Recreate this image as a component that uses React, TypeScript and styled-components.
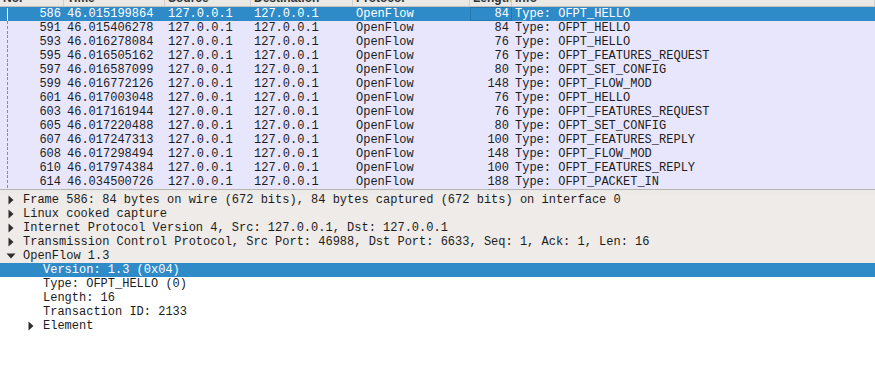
import React from 'react';
import styled, {createGlobalStyle} from 'styled-components';

const Global = createGlobalStyle`
  html, body {
    margin: 0;
    padding: 0;
    background: #ffffff;
  }
  #root {
    height: 373px;
    overflow: hidden;
  }
`;

const COLS = '64px 101px 86px 102px 117px 42px 1fr';

const Window = styled.div`
  display: flex;
  flex-direction: column;
  height: 373px;
  font-family: "Liberation Mono", "DejaVu Sans Mono", monospace;
  font-size: 12px;
  color: #1c1c1c;
  background: #ffffff;
`;

const PacketList = styled.section`
  display: flex;
  flex-direction: column;
  overflow: hidden;
  border-bottom: 1px solid #b9b6b2;
`;

const HeaderRow = styled.div`
  display: grid;
  grid-template-columns: ${COLS};
  height: 20px;
  margin-top: -14px;
  background: #ebe9e6;
  border-bottom: 1px solid #c4c0bb;
  font-family: "Liberation Sans", sans-serif;
  font-weight: bold;
  color: #2e3436;
`;

const HeaderCell = styled.div`
  padding: 5px 3px 0;
  line-height: 14px;
  border-right: 1px solid #d2cec9;
  white-space: nowrap;
  overflow: hidden;
`;

const Row = styled.div<{$selected?: boolean}>`
  display: grid;
  grid-template-columns: ${COLS};
  height: 14px;
  line-height: 14px;
  background: ${p => (p.$selected ? '#2f8bc8' : '#e7e6fd')};
  color: ${p => (p.$selected ? '#ffffff' : '#1c1c1c')};
`;

const Cell = styled.div<{$right?: boolean; $focus?: boolean}>`
  position: relative;
  padding: 0 3px;
  text-align: ${p => (p.$right ? 'right' : 'left')};
  white-space: nowrap;
  overflow: hidden;
  box-sizing: border-box;
  ${p => (p.$focus ? 'box-shadow: inset 0 0 0 1px #2478b1;' : '')}
`;

const Relation = styled.span<{$first?: boolean}>`
  position: absolute;
  left: 7px;
  top: ${p => (p.$first ? '1px' : '0')};
  bottom: 0;
  width: 1px;
  background: ${p =>
    p.$first
      ? '#ffffff'
      : 'repeating-linear-gradient(to bottom, #8a8aa8 0 3px, transparent 3px 5px)'};
`;

const Divider = styled.div`
  position: relative;
  height: 3px;
  background: #eceae7;
`;

const Grip = styled.span`
  position: absolute;
  left: 488px;
  top: -1px;
  width: 12px;
  border-top: 1px dotted #a9a6a2;
`;

const Details = styled.section`
  flex: 1;
  display: flex;
  flex-direction: column;
  background: #ffffff;
`;

const TreeRow = styled.div<{$selected?: boolean; $shaded?: boolean; $depth: number}>`
  display: flex;
  align-items: center;
  height: 14px;
  line-height: 14px;
  padding-left: ${p => 4 + p.$depth * 20}px;
  background: ${p => (p.$selected ? '#2f8bc8' : p.$shaded ? '#eeebe8' : '#ffffff')};
  color: ${p => (p.$selected ? '#ffffff' : '#1c1c1c')};
  white-space: nowrap;
`;

const Expander = styled.span`
  display: inline-flex;
  align-items: center;
  justify-content: center;
  width: 14px;
  height: 14px;
  margin-right: 5px;
`;

type Packet = {no: number; time: string; proto: string; len: number; info: string};

const packets: Packet[] = [
  {no: 586, time: '46.015199864', proto: 'OpenFlow', len: 84, info: 'Type: OFPT_HELLO'},
  {no: 591, time: '46.015406278', proto: 'OpenFlow', len: 84, info: 'Type: OFPT_HELLO'},
  {no: 593, time: '46.016278084', proto: 'OpenFlow', len: 76, info: 'Type: OFPT_HELLO'},
  {no: 595, time: '46.016505162', proto: 'OpenFlow', len: 76, info: 'Type: OFPT_FEATURES_REQUEST'},
  {no: 597, time: '46.016587099', proto: 'OpenFlow', len: 80, info: 'Type: OFPT_SET_CONFIG'},
  {no: 599, time: '46.016772126', proto: 'OpenFlow', len: 148, info: 'Type: OFPT_FLOW_MOD'},
  {no: 601, time: '46.017003048', proto: 'OpenFlow', len: 76, info: 'Type: OFPT_HELLO'},
  {no: 603, time: '46.017161944', proto: 'OpenFlow', len: 76, info: 'Type: OFPT_FEATURES_REQUEST'},
  {no: 605, time: '46.017220488', proto: 'OpenFlow', len: 80, info: 'Type: OFPT_SET_CONFIG'},
  {no: 607, time: '46.017247313', proto: 'OpenFlow', len: 100, info: 'Type: OFPT_FEATURES_REPLY'},
  {no: 608, time: '46.017298494', proto: 'OpenFlow', len: 148, info: 'Type: OFPT_FLOW_MOD'},
  {no: 610, time: '46.017974384', proto: 'OpenFlow', len: 100, info: 'Type: OFPT_FEATURES_REPLY'},
  {no: 614, time: '46.034500726', proto: 'OpenFlow', len: 188, info: 'Type: OFPT_PACKET_IN'},
];

type Node = {text: string; depth: number; expander?: 'closed' | 'open'; selected?: boolean; shaded?: boolean};

const tree: Node[] = [
  {text: 'Frame 586: 84 bytes on wire (672 bits), 84 bytes captured (672 bits) on interface 0', depth: 0, expander: 'closed', shaded: true},
  {text: 'Linux cooked capture', depth: 0, expander: 'closed', shaded: true},
  {text: 'Internet Protocol Version 4, Src: 127.0.0.1, Dst: 127.0.0.1', depth: 0, expander: 'closed', shaded: true},
  {text: 'Transmission Control Protocol, Src Port: 46988, Dst Port: 6633, Seq: 1, Ack: 1, Len: 16', depth: 0, expander: 'closed', shaded: true},
  {text: 'OpenFlow 1.3', depth: 0, expander: 'open', shaded: true},
  {text: 'Version: 1.3 (0x04)', depth: 1, selected: true},
  {text: 'Type: OFPT_HELLO (0)', depth: 1},
  {text: 'Length: 16', depth: 1},
  {text: 'Transaction ID: 2133', depth: 1},
  {text: 'Element', depth: 1, expander: 'closed'},
];

const Arrow = ({open}: {open: boolean}) => (
  <svg width="10" height="10" viewBox="0 0 10 10">
    {open ? (
      <polygon points="0.5,2.5 9.5,2.5 5,7.5" fill="#2e2e2e" />
    ) : (
      <polygon points="2.5,0.5 7.5,5 2.5,9.5" fill="#2e2e2e" />
    )}
  </svg>
);

export default () => {
  const headers = ['No.', 'Time', 'Source', 'Destination', 'Protocol', 'Length', 'Info'];

  return (
    <Window>
      <Global />
      <PacketList>
        <HeaderRow>
          {headers.map(h => (
            <HeaderCell key={h}>{h}</HeaderCell>
          ))}
        </HeaderRow>
        {packets.map((p, i) => {
          const selected = i === 0;
          return (
            <Row key={p.no} $selected={selected}>
              <Cell $right>
                <Relation $first={selected} />
                {p.no}
              </Cell>
              <Cell>{p.time}</Cell>
              <Cell>127.0.0.1</Cell>
              <Cell>127.0.0.1</Cell>
              <Cell>{p.proto}</Cell>
              <Cell $right $focus={selected}>{p.len}</Cell>
              <Cell>{p.info}</Cell>
            </Row>
          );
        })}
      </PacketList>
      <Divider>
        <Grip />
      </Divider>
      <Details>
        {tree.map(n => (
          <TreeRow key={n.text} $depth={n.depth} $selected={n.selected} $shaded={n.shaded}>
            <Expander>{n.expander && <Arrow open={n.expander === 'open'} />}</Expander>
            {n.text}
          </TreeRow>
        ))}
      </Details>
    </Window>
  );
};
